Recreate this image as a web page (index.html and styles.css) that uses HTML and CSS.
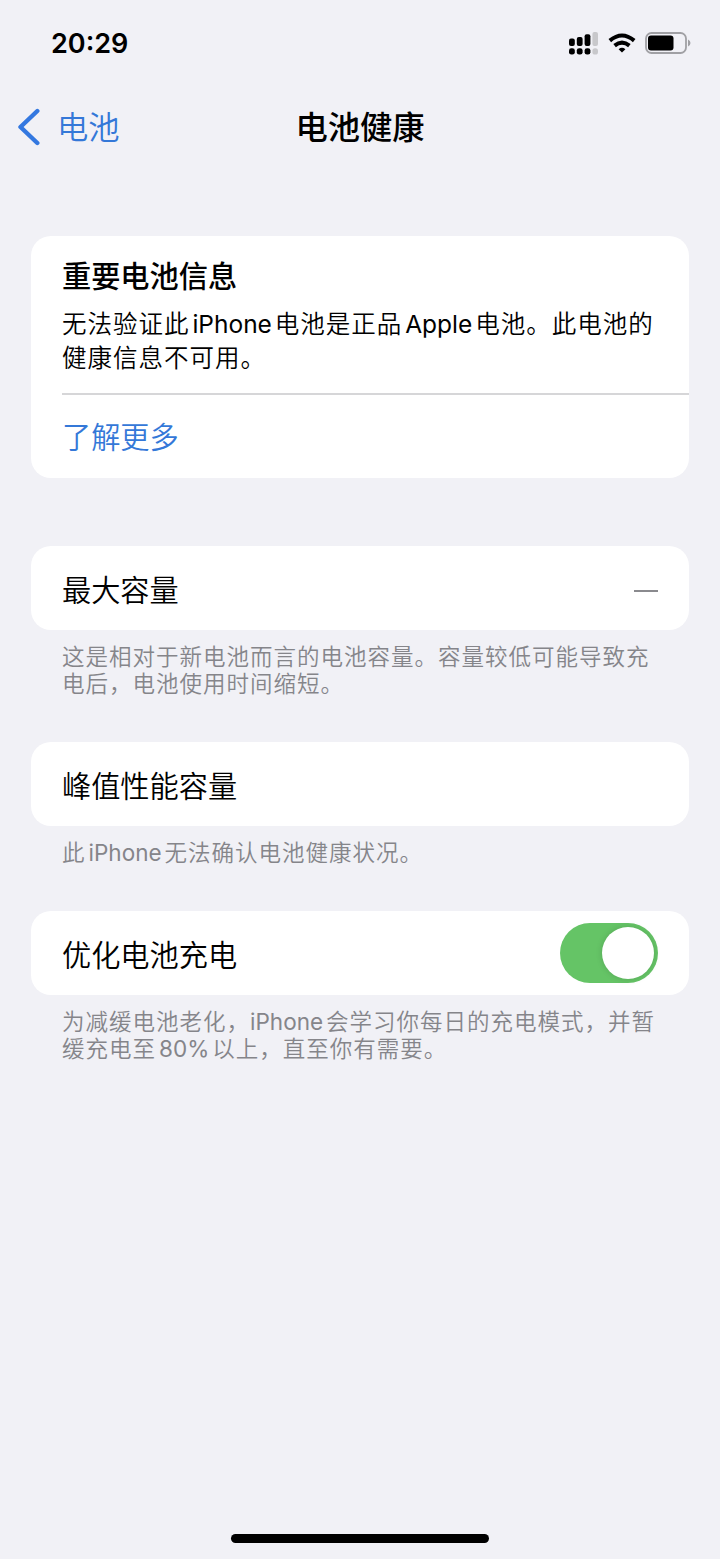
FILE: index.html
```html
<!DOCTYPE html>
<html lang="zh-CN">
<head>
  <meta charset="UTF-8">
  <meta name="viewport" content="width=device-width, initial-scale=1.0">
  <title>电池健康</title>
  <link rel="stylesheet" href="styles.css">
</head>
<body>

  <!-- Status bar -->
  <div class="status-bar">
    <span class="time">20:29</span>
    <div class="status-icons">
      <svg class="signal" width="29" height="24" viewBox="0 0 29 24">
        <g fill="#000">
          <rect x="0" y="7.5" width="5.8" height="7.5" rx="2"/>
          <rect x="7.8" y="6" width="5.8" height="9" rx="2"/>
          <rect x="15.6" y="3.2" width="5.8" height="11.8" rx="2"/>
          <rect x="0" y="17.2" width="5.8" height="6.4" rx="2.4"/>
          <rect x="7.8" y="17.2" width="5.8" height="6.4" rx="2.4"/>
          <rect x="15.6" y="17.2" width="5.8" height="6.4" rx="2.4"/>
        </g>
        <g fill="#c8c8cb">
          <rect x="23.4" y="1" width="5.6" height="14" rx="2"/>
          <rect x="23.4" y="17.2" width="5.6" height="6.4" rx="2.6"/>
        </g>
      </svg>
      <svg class="wifi" width="28" height="20" viewBox="0 0 28 20" fill="none" stroke="#000" stroke-width="4">
        <path d="M1.8 7.6 Q14 -2.6 26.2 7.6"/>
        <path d="M6.6 12.6 Q14 6.6 21.4 12.6"/>
        <path d="M14 19.6 L10.6 16.2 Q14 13.4 17.4 16.2 Z" fill="#000" stroke="none"/>
      </svg>
      <svg class="battery" width="46" height="22" viewBox="0 0 46 22">
        <rect x="1" y="1" width="40" height="20" rx="5.5" fill="none" stroke="#a0a0a4" stroke-width="1.8"/>
        <rect x="3" y="3.5" width="25.5" height="15" rx="3" fill="#000"/>
        <path d="M43 7.5 Q45.5 8.5 45.5 11 Q45.5 13.5 43 14.5 Z" fill="#a0a0a4"/>
      </svg>
    </div>
  </div>

  <!-- Navigation -->
  <div class="nav">
    <a class="back" href="#">
      <svg width="24" height="38" viewBox="0 0 24 38" fill="none" stroke="#3478e0" stroke-width="4.4" stroke-linecap="round" stroke-linejoin="round">
        <path d="M20.3 3 L3.5 19 L20.3 35"/>
      </svg>
      <span>电池</span>
    </a>
    <h1>电池健康</h1>
  </div>

  <div class="content">
    <div class="card notice">
      <div class="notice-text">
        <h2>重要电池信息</h2>
        <p>无法验证此 <span class="latin">iPhone</span> 电池是正品 <span class="latin">Apple</span> 电池。此电池的<br>健康信息不可用。</p>
      </div>
      <a class="more" href="#">了解更多</a>
    </div>

    <div class="card row">
      <span class="label">最大容量</span>
      <span class="dash"></span>
    </div>
    <p class="footnote">这是相对于新电池而言的电池容量。容量较低可能导致充<br>电后，电池使用时间缩短。</p>

    <div class="card row">
      <span class="label">峰值性能容量</span>
    </div>
    <p class="footnote single">此 <span class="latin">iPhone</span> 无法确认电池健康状况。</p>

    <div class="card row">
      <span class="label">优化电池充电</span>
      <span class="toggle"></span>
    </div>
    <p class="footnote">为减缓电池老化，<span class="latin">iPhone</span> 会学习你每日的充电模式，并暂<br>缓充电至 <span class="latin">80%</span> 以上，直至你有需要。</p>
  </div>

  <div class="home-bar"></div>

</body>
</html>
```

FILE: styles.css
```css
* {
  box-sizing: border-box;
}

body {
  display: flex;
  flex-direction: column;
  height: 1559px;
  margin: 0;
  background: #f1f1f6;
  color: #000;
  font-family: Inter, "Noto Sans CJK SC", sans-serif;
  font-weight: 350;
}

h1, h2, p {
  margin: 0;
}

a {
  color: #3478d8;
  text-decoration: none;
}

.status-bar {
  display: flex;
  justify-content: space-between;
  align-items: center;
  height: 86px;
  padding: 0 29px 0 51px;
}

.time {
  font-size: 27px;
  font-weight: 600;
}

.status-icons {
  display: flex;
  align-items: center;
  gap: 9px;
}

.signal {
  margin-right: 1px;
}

.nav {
  display: grid;
  grid-template-columns: 1fr auto 1fr;
  align-items: center;
  height: 82px;
  padding: 0 17px;
}

.nav h1 {
  padding-bottom: 4px;
  font-size: 32.3px;
  font-weight: 500;
}

.back {
  display: flex;
  align-items: center;
  gap: 16px;
  font-size: 31.3px;
}

.back span {
  padding-bottom: 3px;
}

.content {
  padding: 68px 31px 0;
}

.card {
  background: #fff;
  border-radius: 20px;
}

.notice {
  height: 242px;
  margin-bottom: 68px;
  padding-left: 31px;
}

.notice-text {
  height: 159px;
  padding-top: 20px;
  border-bottom: 2px solid #d6d6d8;
}

.notice h2 {
  font-size: 29.2px;
  font-weight: 500;
  line-height: 42px;
}

.notice p {
  margin-top: 9px;
  font-size: 24.5px;
  line-height: 34px;
  letter-spacing: 1px;
  word-spacing: -5px;
  white-space: nowrap;
}

.latin {
  font-weight: 400;
  letter-spacing: 0;
}

.more {
  display: block;
  font-size: 29.2px;
  line-height: 85px;
}

.row {
  display: flex;
  justify-content: space-between;
  align-items: center;
  height: 84px;
  padding: 0 31px;
  font-size: 29.2px;
}

.label {
  padding-bottom: 1px;
}

.dash {
  width: 24px;
  height: 2px;
  margin-top: 5px;
  background: #8a8a8e;
}

.footnote {
  height: 112px;
  padding: 13px 31px 0;
  color: #85858a;
  font-size: 22.5px;
  line-height: 27px;
  letter-spacing: 1px;
  word-spacing: -4.3px;
  white-space: nowrap;
}

.single {
  height: 85px;
}

.toggle {
  width: 98px;
  height: 60px;
  padding: 4px;
  border-radius: 30px;
  background: #65c466;
}

.toggle::after {
  content: "";
  display: block;
  width: 52px;
  height: 52px;
  margin-left: auto;
  border-radius: 50%;
  background: #fff;
  box-shadow: 0 0 6px rgba(0, 0, 0, 0.15);
}

.home-bar {
  width: 258px;
  height: 9px;
  margin: auto auto 16px;
  border-radius: 5px;
  background: #000;
}
```
